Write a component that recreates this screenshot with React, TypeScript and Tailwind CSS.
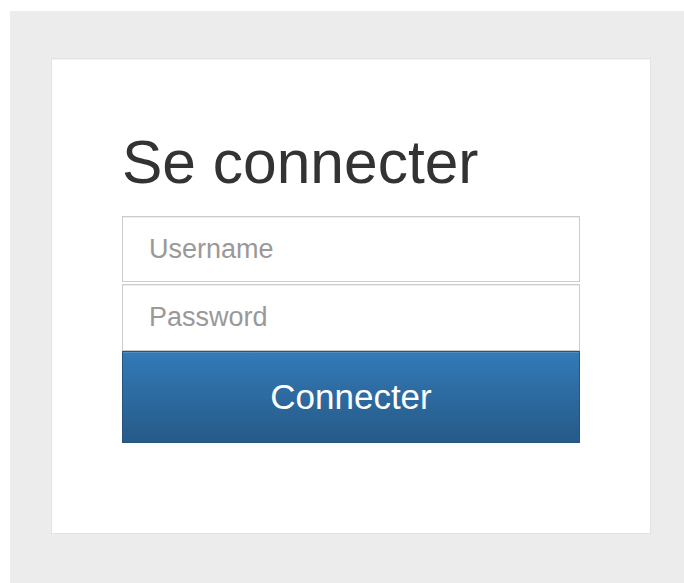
import { useState } from "react";

export default function App() {
  const [username, setUsername] = useState("");
  const [password, setPassword] = useState("");

  return (
    <div className="min-h-screen pl-[10px] pt-[11px] bg-white font-['Liberation_Sans',Arial,sans-serif]">
      <div className="min-h-[572px] bg-[#ececec] pt-[47px] pl-[41px]">
        <div className="w-[600px] h-[476px] bg-white border border-[#e3e3e3] shadow-[inset_0_1px_1px_rgba(0,0,0,0.05)] px-[70px] pt-[70px]">
          <form className="flex flex-col" onSubmit={(e) => e.preventDefault()}>
            <h2 className="text-[60.5px] leading-[66px] text-[#333] font-normal">Se connecter</h2>
            <input
              type="text"
              value={username}
              onChange={(e) => setUsername(e.target.value)}
              placeholder="Username"
              className="mt-[21px] h-[66px] w-full border border-[#ccc] bg-white pl-[26px] pr-6 text-[27px] text-[#555] placeholder:text-[#999] shadow-[inset_0_1px_1px_rgba(0,0,0,0.075)] outline-none"
            />
            <input
              type="password"
              value={password}
              onChange={(e) => setPassword(e.target.value)}
              placeholder="Password"
              className="mt-[2px] h-[67px] w-full border border-[#ccc] bg-white pl-[26px] pr-6 text-[27px] text-[#555] placeholder:text-[#999] shadow-[inset_0_1px_1px_rgba(0,0,0,0.075)] outline-none"
            />
            <button
              type="submit"
              className="h-[92px] w-full border border-[#245580] bg-linear-to-b from-[#337ab7] to-[#265a88] text-[35px] text-white shadow-[inset_0_1px_0_rgba(255,255,255,0.15)]"
            >
              Connecter
            </button>
          </form>
        </div>
      </div>
    </div>
  );
}
